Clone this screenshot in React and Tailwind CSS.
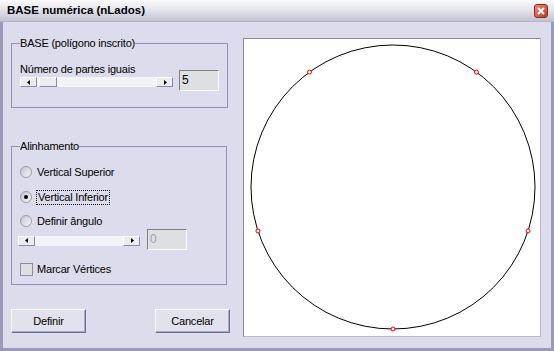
import React from 'react'

const font = { fontFamily: '"Liberation Sans", Arial, sans-serif' }

function Arrow({ dir }) {
  return (
    <div className="w-[17px] h-full flex items-center justify-center bg-[#ecebf2] border border-t-white border-l-white border-b-[#8a8aa6] border-r-[#8a8aa6]">
      <svg width="4" height="5" viewBox="0 0 4 5">
        {dir === 'left' ? <path d="M3 0 L0 2.5 L3 5 Z" fill="#000" /> : <path d="M1 0 L4 2.5 L1 5 Z" fill="#000" />}
      </svg>
    </div>
  )
}

function ScrollBar({ width, thumb }) {
  return (
    <div className="h-[10px] flex bg-[#f4f4f8]" style={{ width }}>
      <Arrow dir="left" />
      <div className="flex-1 pl-[2px]">
        {thumb && <div className="w-[18px] h-full bg-[#ecebf2] border border-t-white border-l-white border-b-[#8a8aa6] border-r-[#8a8aa6]" />}
      </div>
      <Arrow dir="right" />
    </div>
  )
}

function Edit({ value, disabled }) {
  return (
    <div className="w-[40px] h-[21px] bg-[#dde0e2] border border-t-[#808080] border-l-[#808080] border-b-white border-r-white pl-[2px] pt-[2px] leading-[14px]">
      <span className={disabled ? 'text-[#a0a0a0] text-[12px]' : 'text-black text-[12px]'}>{value}</span>
    </div>
  )
}

function Radio({ label, checked, focus }) {
  return (
    <div className="h-[16px] flex items-center">
      <div className="w-[12px] h-[12px] rounded-full border border-[#9c9cac] bg-gradient-to-br from-[#c4c4cc] to-[#f6f6f8] flex items-center justify-center">
        {checked && <div className="w-[4px] h-[4px] rounded-full bg-black" />}
      </div>
      <span className={focus ? 'ml-[4px] px-px leading-[13px] border border-dotted border-black' : 'ml-[5px] leading-[13px]'}>{label}</span>
    </div>
  )
}

function Button({ children }) {
  return (
    <div className="w-[75px] h-[24px] flex items-center justify-center bg-[#e2e2ee] border border-t-white border-l-white border-b-[#6e6e90] border-r-[#6e6e90] shadow-[inset_-1px_-1px_0_#a8a8c4]">
      {children}
    </div>
  )
}

export default function App() {
  const cx = 149
  const cy = 148
  const r = 142
  const pts = [90, 162, 234, 306, 18].map((a) => [cx + r * Math.cos((a * Math.PI) / 180), cy + r * Math.sin((a * Math.PI) / 180)])

  return (
    <div className="w-[554px] h-[351px] flex flex-col bg-[#dcdcec] text-[11px] tracking-[-0.2px] text-black overflow-hidden" style={font}>
      <div className="h-[22px] flex items-center justify-between pl-[7px] pr-[6px] bg-gradient-to-b from-[#fbfbfd] via-[#e2e2ea] to-[#c2c2d2] border-b border-[#b4b4c8]">
        <span className="font-bold text-[11.5px] tracking-normal">BASE numérica (nLados)</span>
        <div className="w-[14px] h-[14px] mt-[1px] rounded-[3px] bg-gradient-to-br from-[#e88a7a] to-[#b83a2c] border border-[#8c2a20] flex items-center justify-center">
          <svg width="8" height="8" viewBox="0 0 8 8">
            <path d="M1 1 L7 7 M7 1 L1 7" stroke="#fff" strokeWidth="2" />
          </svg>
        </div>
      </div>

      <div className="flex-1 flex pl-[8px] pt-[16px] border-l-[3px] border-r-[3px] border-b-[3px] border-[#9a9ab8]">
        <div className="w-[219px] flex flex-col">
          <fieldset className="w-[216px] mt-[-2px] border border-[#9090b8] px-[8px] pt-[12px] pb-[16px]">
            <legend className="leading-[14px] px-0">BASE (polígono inscrito)</legend>
            <div className="flex">
              <div className="flex flex-col">
                <span className="leading-[14px]">Número de partes iguais</span>
                <div className="mt-px">
                  <ScrollBar width={153} thumb />
                </div>
              </div>
              <div className="ml-[6px] mt-[8px]">
                <Edit value="5" />
              </div>
            </div>
          </fieldset>

          <fieldset className="w-[216px] mt-[31px] border border-[#9090b8] px-[8px] pt-[11px] pb-[7px]">
            <legend className="leading-[14px] px-0">Alinhamento</legend>
            <Radio label="Vertical Superior" />
            <div className="mt-[9px]">
              <Radio label="Vertical Inferior" checked focus />
            </div>
            <div className="mt-[8px]">
              <Radio label="Definir ângulo" />
            </div>
            <div className="flex items-center ml-[-2px]">
              <div className="mt-[2px]">
                <ScrollBar width={122} />
              </div>
              <div className="ml-[7px]">
                <Edit value="0" disabled />
              </div>
            </div>
            <div className="mt-[11px] h-[16px] flex items-center">
              <div className="w-[13px] h-[13px] bg-[#dde0e2] border border-[#8c8ca4]" />
              <span className="ml-[4px]">Marcar Vértices</span>
            </div>
          </fieldset>

          <div className="mt-[24px] flex justify-between">
            <Button>Definir</Button>
            <Button>Cancelar</Button>
          </div>
        </div>

        <div className="ml-[13px] w-[298px] h-[299px] bg-white border border-t-[#8a8a9c] border-l-[#8a8a9c] border-b-[#b8b8c8] border-r-[#b8b8c8]">
          <svg width="296" height="297" viewBox="0 0 296 297">
            <circle cx={cx} cy={cy} r={r} fill="none" stroke="#000" strokeWidth="1" />
            {pts.map(([x, y], i) => (
              <circle key={i} cx={x} cy={y} r="2" fill="#fff" stroke="#e00000" strokeWidth="1" />
            ))}
          </svg>
        </div>
      </div>
    </div>
  )
}
